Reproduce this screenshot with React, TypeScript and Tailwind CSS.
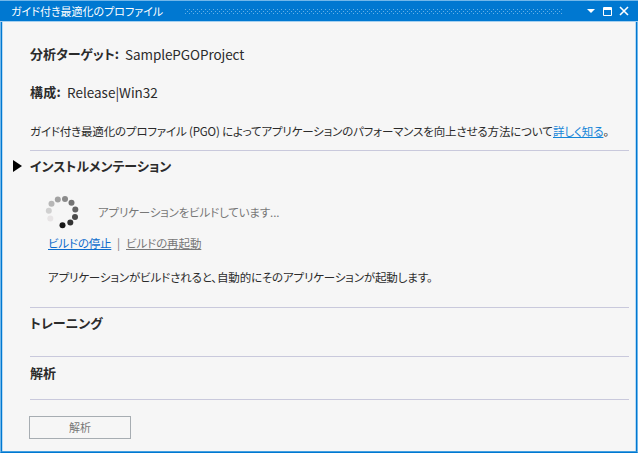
import React from "react";

const dotColumns = Array.from({ length: 95 }, (_, i) => i * 4);

function Grip() {
  return (
    <svg className="ml-5 h-[5px] w-[377px] shrink-0" viewBox="0 0 377 5" shapeRendering="crispEdges" fill="#66b0e6">
      {dotColumns.map((x) => (
        <g key={x}>
          <rect x={x} y="0" width="1" height="1" />
          <rect x={x + 2} y="2" width="1" height="1" />
          <rect x={x} y="4" width="1" height="1" />
        </g>
      ))}
    </svg>
  );
}

function TitleBar() {
  return (
    <header className="flex h-[22px] shrink-0 items-center border-t border-b border-t-[#72b7e9] border-b-[#a6d0ef] bg-[#0078d1] pl-[11px] text-[11px] text-white">
      <h1 className="w-[154px] shrink-0">ガイド付き最適化のプロファイル</h1>
      <Grip />
      <svg className="ml-[25px] h-5 w-[44px] shrink-0" viewBox="0 0 44 20" fill="none">
        <path d="M0 8h8L4 12z" fill="#fff" />
        <path d="M16.5 6.5h8v8h-8z M16 7.5h9 M16 8.5h9" stroke="#fff" />
        <path d="M33 6l8 8M41 6l-8 8" stroke="#fff" strokeWidth="1.6" />
      </svg>
    </header>
  );
}

function Spinner() {
  const dots: [number, number, string][] = [
    [19.5, 30.3, "#161616"],
    [27.3, 27.4, "#333333"],
    [32, 22, "#4a4a4a"],
    [32.3, 14.5, "#646464"],
    [28.5, 7.7, "#747474"],
    [22, 4, "#8b8b8b"],
    [14.8, 4.5, "#a2a2a2"],
    [8.5, 8.7, "#b7b7b7"],
    [5.8, 15.8, "#d0d0d0"],
    [7.3, 23.5, "#e7e4e5"],
  ];
  return (
    <svg className="h-[34px] w-[38px] shrink-0" viewBox="0 0 38 34">
      {dots.map(([x, y, fill]) => (
        <circle key={fill} cx={x} cy={y} r="3" fill={fill} />
      ))}
    </svg>
  );
}

export default function App() {
  return (
    <div
      className="flex h-[453px] w-[638px] flex-col overflow-hidden bg-[#f6f6f6] font-['Noto_Sans_CJK_JP',sans-serif] whitespace-nowrap text-[#2b2b2b] [font-feature-settings:'palt']"
    >
      <TitleBar />
      <main className="flex min-h-0 flex-1 border-x border-b border-x-[#72b7e9] border-b-[#0078d1]">
        <div className="flex min-w-0 flex-1 flex-col border-x border-b border-x-[#0078d1] border-b-[#45a0e0]">
          <div className="flex min-w-0 flex-1 flex-col border-x border-[#b9daf2] pr-[6px] pl-[27px]">
            <p className="mt-[22px] flex h-5 items-center text-[13px]">
              <b className="w-[95px] font-bold">分析ターゲット:</b>
              <span className="text-[13.5px] tracking-[-0.08px]">SamplePGOProject</span>
            </p>
            <p className="mt-[18px] flex h-5 items-center text-[13px]">
              <b className="w-[37px] font-bold tracking-[0.2px]">構成:</b>
              <span className="text-[13.5px]">Release|Win32</span>
            </p>
            <p className="mt-[19px] flex h-5 items-center pt-px text-[11.5px]">
              <span className="w-[523px] tracking-[-0.16px]">ガイド付き最適化のプロファイル (PGO) によってアプリケーションのパフォーマンスを向上させる方法について</span>
              <a className="text-[#1585d8] underline tracking-[-0.1px]">詳しく知る</a>。
            </p>
            <section className="mt-[9px] h-[157px] border-t border-[#c9c9dc]">
              <h2 className="-ml-[17px] flex h-[30px] items-center text-[13px] font-bold">
                <svg className="mr-2 h-3 w-[9px]" viewBox="0 0 9 12">
                  <path d="M0 0l9 6-9 6z" fill="#000" />
                </svg>
                <span>インストルメンテーション</span>
              </h2>
              <div className="mt-[14px] ml-[13px] flex h-[34px] items-center text-[11.5px] text-[#777]">
                <Spinner />
                <span className="ml-[17px] pt-[2px] tracking-[-0.16px]">アプリケーションをビルドしています...</span>
              </div>
              <div className="mt-[4px] ml-[18px] flex h-5 items-center pt-px text-[11.5px]">
                <a className="w-[63px] tracking-[-0.2px] text-[#0d6ccc] underline">ビルドの停止</a>
                <span className="ml-[6px] w-[9px] text-[#777]">|</span>
                <a className="tracking-[-0.1px] text-[#777] underline">ビルドの再起動</a>
              </div>
              <p className="mt-[14px] ml-[18px] flex h-5 items-center pt-[2px] text-[11.5px] tracking-[-0.13px]">
                アプリケーションがビルドされると、自動的にそのアプリケーションが起動します。
              </p>
            </section>
            <section className="h-[49px] border-t border-[#c9c9dc]">
              <h2 className="flex h-[30px] items-center text-[13px] font-bold">トレーニング</h2>
            </section>
            <section className="h-[43px] border-t border-[#c9c9dc]">
              <h2 className="flex h-[32px] items-center text-[13px] font-bold">解析</h2>
            </section>
            <footer className="border-t border-[#c9c9dc] pt-4">
              <button className="-ml-px flex h-[23px] w-[102px] items-center justify-center border border-[#a7adb2] pb-px text-[11px] text-[#777]">
                解析
              </button>
            </footer>
          </div>
        </div>
      </main>
    </div>
  );
}
